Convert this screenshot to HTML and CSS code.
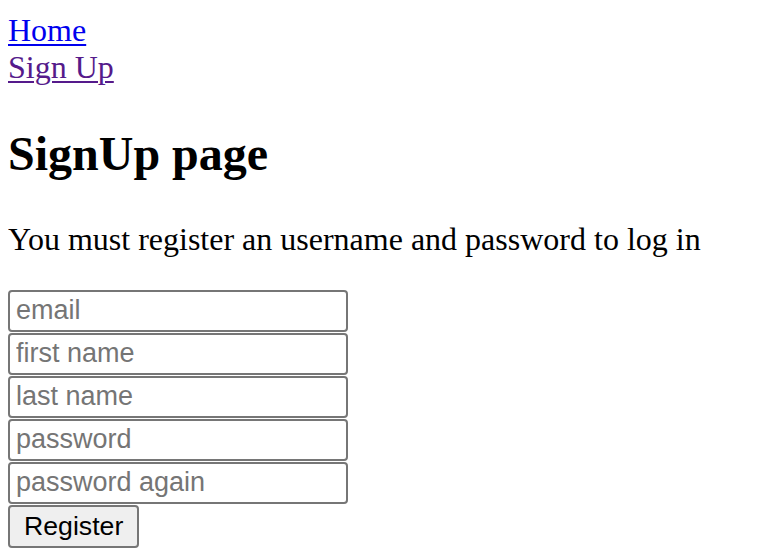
FILE: index.html
```html
<!DOCTYPE html>
<html lang="en">
<head>
<meta charset="utf-8">
<title>SignUp page</title>
<link rel="stylesheet" href="styles.css">
</head>
<body>
<nav class="nav">
  <a class="nav-link" href="#">Home</a>
  <a class="nav-link visited" href="#">Sign Up</a>
</nav>
<section class="page">
  <h1 class="title">SignUp page</h1>
  <p class="intro">You must register an username and password to log in</p>
  <form class="form">
    <input class="field" type="text" placeholder="email">
    <input class="field" type="text" placeholder="first name">
    <input class="field" type="text" placeholder="last name">
    <input class="field" type="password" placeholder="password">
    <input class="field" type="password" placeholder="password again">
    <button class="btn" type="button">Register</button>
  </form>
</section>
</body>
</html>
```
FILE: styles.css
```css
html, body {
  background: #ffffff;
}
body {
  margin: 12px 8px 8px 8px;
  font-family: "Liberation Serif", "Times New Roman", serif;
  font-size: 32px;
  color: #000000;
}
.nav {
  display: flex;
  flex-direction: column;
  align-items: flex-start;
}
.nav-link {
  color: #0000ee;
  text-decoration: underline;
  text-decoration-thickness: 2px;
  text-underline-offset: 3px;
  line-height: 36.8px;
}
.nav-link.visited {
  color: #551a8b;
}
.title {
  font-size: 48px;
  font-weight: bold;
  margin: 40px 0 40px 0;
  line-height: 55px;
}
.intro {
  margin: 0 0 32px 0;
  line-height: 37px;
}
.form {
  display: flex;
  flex-direction: column;
  align-items: flex-start;
  gap: 1px;
}
.field {
  box-sizing: border-box;
  width: 340px;
  height: 42px;
  margin: 0;
  padding: 2px 6px;
  border: 2px solid #767676;
  border-radius: 4px;
  font-family: "Liberation Sans", Arial, sans-serif;
  font-size: 27px;
  color: #000;
  background: #fff;
}
.field::placeholder {
  color: #757575;
}
.btn {
  box-sizing: border-box;
  height: 43px;
  margin: 0;
  padding: 0 14px;
  border: 2px solid #767676;
  border-radius: 4px;
  background: #efefef;
  font-family: "Liberation Sans", Arial, sans-serif;
  font-size: 26.67px;
  color: #000;
}
```
